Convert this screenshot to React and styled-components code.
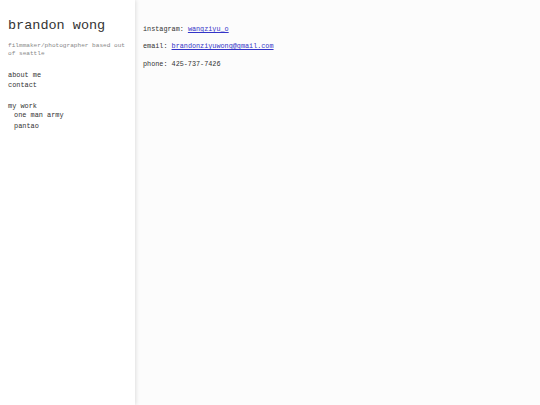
import React from "react";
import styled, {createGlobalStyle} from "styled-components";

const GlobalStyle = createGlobalStyle`
  html, body {
    margin: 0;
    padding: 0;
    height: 100%;
  }
  body {
    font-family: "Liberation Mono", "DejaVu Sans Mono", monospace;
    background: #fcfcfc;
    color: #333;
  }
  #root {
    height: 100%;
  }
`

const Page = styled.div`
  display: flex;
  flex-direction: row;
  height: 405px;
`

const Sidebar = styled.nav`
  width: 135px;
  flex-shrink: 0;
  background: #ffffff;
  box-shadow: 1px 0 4px rgba(0, 0, 0, 0.12);
  padding: 17px 0 0 8px;
  box-sizing: border-box;
  z-index: 1;
`

const Title = styled.h1`
  margin: 0;
  font-size: 13.5px;
  font-weight: normal;
  line-height: 18px;
  color: #333;
`

const Subtitle = styled.p`
  margin: 7px 0 0;
  font-size: 6.1px;
  line-height: 8px;
  color: #888;
`

const NavList = styled.ul`
  list-style: none;
  margin: ${(props) => props.top} 0 0;
  padding: 0 0 0 ${(props) => props.indent || "0"};
`

const NavItem = styled.li`
  font-size: 6.9px;
  line-height: ${(props) => props.lh || "10px"};
  color: #333;
`

const Main = styled.main`
  flex: 1;
  padding: 24px 0 0 8px;
`

const Line = styled.p`
  margin: 0 0 ${(props) => props.gap || "0"};
  font-size: 6.8px;
  line-height: 10px;
  color: #333;
`

const Link = styled.a`
  color: #3434c8;
  text-decoration: underline;
`

const App = () => {
    return (
        <>
            <GlobalStyle/>
            <Page>
                <Sidebar>
                    <Title>brandon wong</Title>
                    <Subtitle>filmmaker/photographer based out of seattle</Subtitle>

                    <NavList top="12px">
                        <NavItem>about me</NavItem>
                        <NavItem>contact</NavItem>
                    </NavList>

                    <NavList top="12px">
                        <NavItem lh="9px">my work
                            <NavList top="0" indent="6px">
                                <NavItem lh="9.5px">one man army</NavItem>
                                <NavItem lh="10px">pantao</NavItem>
                            </NavList>
                        </NavItem>
                    </NavList>
                </Sidebar>

                <Main>
                    <Line gap="7px">instagram: <Link href="#">wangziyu_o</Link></Line>
                    <Line gap="8px">email: <Link href="#">brandonziyuwong@gmail.com</Link></Line>
                    <Line>phone: 425-737-7426</Line>
                </Main>
            </Page>
        </>
    );
}
export default App;
